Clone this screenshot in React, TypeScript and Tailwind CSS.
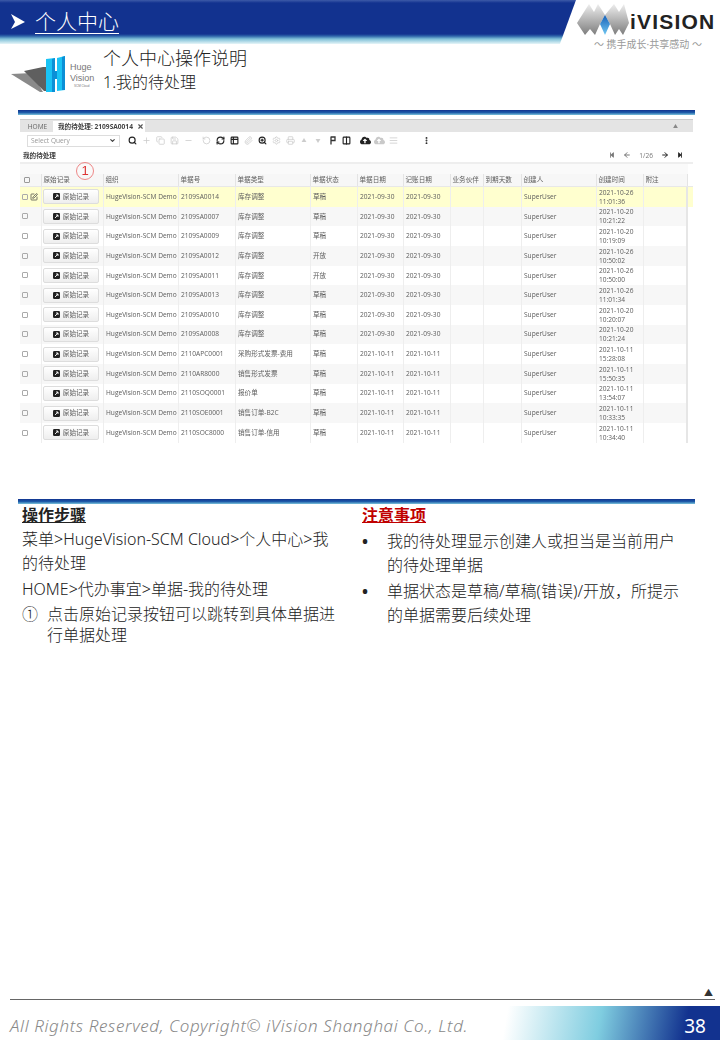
import React from "react";
import { Search, Plus, Copy, Save, Minus, RotateCcw, RefreshCw, Table2, Paperclip, ZoomIn, Settings, Printer, Columns2, AlignJustify, EllipsisVertical, ArrowLeft, ArrowRight, SquarePen, ChevronDown, X } from "lucide-react";
import { FaCloudUploadAlt, FaStepBackward, FaStepForward } from "react-icons/fa";

const cjk = "font-['Noto_Sans','Noto_Sans_CJK_SC',sans-serif]";
const columns = "grid grid-cols-[22px_62px_75px_57px_75px_47px_46px_47px_33px_38px_75px_47px_44px_5px]";
const heads = ["", "原始记录", "组织", "单据号", "单据类型", "单据状态", "单据日期", "记账日期", "业务伙伴", "到期天数", "创建人", "创建时间", "附注"];
const rows = [
  ["2109SA0014", "库存调整", "草稿", "2021-09-30", "2021-10-26", "11:01:36"],
  ["2109SA0007", "库存调整", "草稿", "2021-09-30", "2021-10-20", "10:21:22"],
  ["2109SA0009", "库存调整", "草稿", "2021-09-30", "2021-10-20", "10:19:09"],
  ["2109SA0012", "库存调整", "开放", "2021-09-30", "2021-10-26", "10:50:02"],
  ["2109SA0011", "库存调整", "开放", "2021-09-30", "2021-10-26", "10:50:00"],
  ["2109SA0013", "库存调整", "草稿", "2021-09-30", "2021-10-26", "11:01:34"],
  ["2109SA0010", "库存调整", "草稿", "2021-09-30", "2021-10-20", "10:20:07"],
  ["2109SA0008", "库存调整", "草稿", "2021-09-30", "2021-10-20", "10:21:24"],
  ["2110APC0001", "采购形式发票-费用", "草稿", "2021-10-11", "2021-10-11", "15:28:08"],
  ["2110AR8000", "销售形式发票", "草稿", "2021-10-11", "2021-10-11", "15:50:35"],
  ["2110SOQ0001", "报价单", "草稿", "2021-10-11", "2021-10-11", "13:54:07"],
  ["2110SOE0001", "销售订单-B2C", "草稿", "2021-10-11", "2021-10-11", "10:33:35"],
  ["2110SOC8000", "销售订单-信用", "草稿", "2021-10-11", "2021-10-11", "10:34:40"],
];

function Rule() {
  return <div className="h-[5px] mx-[18px] w-[677px] shrink-0 bg-gradient-to-b from-[#12328f] via-[#1d5aa8] to-[#7cc3da]" />;
}

function Diamonds() {
  return (
    <svg width="54" height="31" viewBox="0 0 54 31" className="shrink-0">
      <defs>
        <linearGradient id="g" x1="0" y1="0" x2="0" y2="1">
          <stop offset="0" stopColor="#eeeeee" />
          <stop offset="1" stopColor="#7d7d7d" />
        </linearGradient>
        <linearGradient id="b" x1="0" y1="0" x2="0" y2="1">
          <stop offset="0" stopColor="#1560b8" />
          <stop offset="1" stopColor="#72c8f2" />
        </linearGradient>
      </defs>
      <polygon points="1,19 13,0 18,8 22,0 29,11 38,0 43,8 48,0 53,19 47,31 43,25 39,31 34,20 29,11 24,20 19,31 14,25 9,31" fill="url(#g)" />
      <polygon points="24,20 29,11 34,20 29,31" fill="url(#b)" />
    </svg>
  );
}

function HugeLogo() {
  return (
    <div className="flex items-center w-[84px] h-[40px] shrink-0">
      <svg width="60" height="38" viewBox="0 0 60 38" className="shrink-0">
        <polygon points="1,18 22,17 33,36 30,36" fill="#8a8a8a" />
        <polygon points="14,15 33,11 37,11 37,35 34,35" fill="#5f5f5f" />
        <polygon points="36,3 45,2 45,36 36,36" fill="#19c3f5" />
        <polygon points="42,3 45,2 45,36 42,36" fill="#0b8fd6" />
        <polygon points="47,2 55,0 55,34 47,35" fill="#19c3f5" />
        <polygon points="52,1 55,0 55,34 52,34" fill="#0b8fd6" />
        <polygon points="45,15 47,15 47,23 45,23" fill="#0b8fd6" />
      </svg>
      <div className="-mr-[16px] flex flex-col font-['Liberation_Sans',sans-serif] font-normal text-[9px] leading-[11px] text-[#777]">
        <span>Huge</span>
        <span>Vision</span>
        <span className="text-[3px] leading-[4px] pl-[4px]">SCM Cloud</span>
      </div>
    </div>
  );
}

function Tool({ icon: I, dark, x }: { icon: any; dark?: boolean; x?: string }) {
  return (
    <span className={`w-[14px] flex justify-center ${x ?? ""}`}>
      <I size={9} strokeWidth={dark ? 3 : 2} className={dark ? "text-[#222]" : "text-[#c9c9c9]"} />
    </span>
  );
}

function Shot() {
  return (
    <div className="relative mx-[20px] w-[673px] h-[324px] shrink-0 blur-[0.35px] overflow-hidden text-[6.6px] font-normal text-[#5c5c5c] font-['Open_Sans','Noto_Sans_CJK_SC',sans-serif]">
      <div className="h-[13px] bg-[#e4e4e4] border-t border-[#ccc] flex items-end pl-[2px]">
        <div className="w-[31px] h-[11px] flex items-center justify-center text-[#666]">HOME</div>
        <div className="w-[92px] h-[11px] flex items-center pl-[5px] gap-[4px] bg-white font-bold text-[#444]">
          我的待处理: 2109SA0014<X size={7} strokeWidth={4} className="text-[#555]" />
        </div>
        <span className="ml-auto mr-[15px] mb-[2px] text-[#888] text-[5px]">▲</span>
      </div>
      <div className="h-[17px] flex items-center pl-[7px]">
        <div className="w-[93px] h-[12px] border border-[#ddd] flex items-center justify-between px-[3px] text-[#999]">
          Select Query<ChevronDown size={7} strokeWidth={4} className="text-[#444]" />
        </div>
        <div className="ml-[5px] flex items-center">
          <Tool icon={Search} dark /><Tool icon={Plus} /><Tool icon={Copy} /><Tool icon={Save} /><Tool icon={Minus} />
          <Tool icon={RotateCcw} x="ml-[4px]" /><Tool icon={RefreshCw} dark /><Tool icon={Table2} dark /><Tool icon={Paperclip} /><Tool icon={ZoomIn} dark />
          <Tool icon={Settings} /><Tool icon={Printer} />
          <span className="w-[14px] text-center text-[5px] text-[#ccc]">▲</span>
          <span className="w-[14px] text-center text-[5px] text-[#ccc]">▼</span>
          <span className="w-[14px] flex justify-center">
            <svg width="7" height="9" viewBox="0 0 7 9"><path d="M2 0.5V8.5M2 1H6V4.5H2" fill="none" stroke="#333" strokeWidth="1.3" /></svg>
          </span>
          <Tool icon={Columns2} dark />
          <span className="w-[14px] ml-[5px] flex justify-center"><FaCloudUploadAlt size={11} className="text-[#222]" /></span>
          <span className="w-[14px] flex justify-center"><FaCloudUploadAlt size={11} className="text-[#c9c9c9]" /></span>
          <Tool icon={AlignJustify} />
          <Tool icon={EllipsisVertical} dark x="ml-[19px]" />
        </div>
      </div>
      <div className="h-[15px] flex items-center justify-between pl-[3px] pr-[10px] border-b-2 border-[#eee]">
        <span className="font-bold text-[#444]">我的待处理</span>
        <div className="flex items-center gap-[8px] text-[#777]">
          <FaStepBackward size={6} className="text-[#777]" />
          <ArrowLeft size={8} strokeWidth={3} className="text-[#777]" />
          <span>1/26</span>
          <ArrowRight size={8} strokeWidth={3} className="text-[#222]" />
          <FaStepForward size={6} className="text-[#222]" />
        </div>
      </div>
      <div className="h-[10px] bg-[#fafafa] w-[668px]" />
      <div className={`${columns} h-[13px] w-[673px] bg-[#f7f7f7] border-b border-[#e8e8e8] items-center`}>
        {heads.map((h, i) => (
          <div key={i} className="h-full flex items-center pl-[1.5px] border-r border-[#e4e4e4]">
            {i === 0 ? <span className="ml-[2px] w-[6px] h-[6px] border border-[#999] rounded-[1px]" /> : h}
          </div>
        ))}
        <div className="h-full bg-white" />
      </div>
      {rows.map((r, i) => (
        <div key={r[0]} className={`${columns} h-[19.66px] w-[673px] items-center ${i === 0 ? "bg-[#ffffcf]" : i % 2 ? "bg-[#f7f7f7]" : "bg-white"}`}>
          <div className="h-full flex items-center gap-[2px] pl-[2px] border-r border-[#eee]">
            <span className="w-[6px] h-[6px] border border-[#aaa] rounded-[1px]" />
            {i === 0 && <SquarePen size={8} className="text-[#333]" />}
          </div>
          <div className="h-full flex items-center pl-[1px] border-r border-[#eee]">
            <div className="w-[56px] h-[15px] flex items-center justify-center gap-[3px] rounded-[2px] border border-[#ddd] bg-gradient-to-b from-white to-[#eee]">
              <svg width="7" height="7" viewBox="0 0 7 7" className="shrink-0">
                <rect width="7" height="7" rx="1.2" fill="#222" />
                <path d="M2 5L5 2M3 2H5V4" fill="none" stroke="#fff" strokeWidth="0.9" />
              </svg>
              原始记录
            </div>
          </div>
          <div className="h-full flex items-center pl-[2px] border-r border-[#eee] whitespace-nowrap">HugeVision-SCM Demo</div>
          <div className="h-full flex items-center pl-[2px] border-r border-[#eee]">{r[0]}</div>
          <div className="h-full flex items-center pl-[2px] border-r border-[#eee]">{r[1]}</div>
          <div className="h-full flex items-center pl-[2px] border-r border-[#eee]">{r[2]}</div>
          <div className="h-full flex items-center pl-[2px] border-r border-[#eee]">{r[3]}</div>
          <div className="h-full flex items-center pl-[2px] border-r border-[#eee]">{r[3]}</div>
          <div className="h-full border-r border-[#eee]" />
          <div className="h-full border-r border-[#eee]" />
          <div className="h-full flex items-center pl-[2px] border-r border-[#eee]">SuperUser</div>
          <div className="h-full flex flex-col justify-center pl-[2px] leading-[9px] border-r border-[#eee]">
            <span>{r[4]}</span>
            <span>{r[5]}</span>
          </div>
          <div className="h-full border-r-2 border-[#e6e6e6]" />
          <div className={`h-full ${i === 0 ? "bg-[#ffffcf]" : "bg-white"}`} />
        </div>
      ))}
      <div className="absolute left-[56px] top-[43px] w-[18px] h-[18px] rounded-full border border-[#e88] text-[#d33] text-[13px] leading-[16px] text-center font-['Liberation_Sans',sans-serif]">1</div>
    </div>
  );
}

export default function App() {
  return (
    <div className={`w-[720px] h-[1040px] bg-white flex flex-col overflow-hidden text-[16px] font-light text-[#222] ${cjk}`}>
      <header className="flex h-[52px] shrink-0">
        <div className="w-[576px] h-[44px] [clip-path:polygon(0_0,100%_0,97.2%_100%,0_100%)] bg-[linear-gradient(to_bottom,#3d5aa8_0,#12328f_3px,#12328f_34px,#2b62a8_36px,#7fc0d8_39px,#e6f5f8_44px)] flex items-center pb-[2px]">
          <svg width="14" height="15" viewBox="0 0 14 15" className="ml-[11px] mt-[1px]"><polygon points="0,0 14,8 0,15 4,8" fill="#fff" /></svg>
          <span className="ml-[10px] text-[21px] leading-[26px] text-white underline underline-offset-[4px] decoration-1">个人中心</span>
        </div>
        <div className="flex-1 flex flex-col pt-[4px]">
          <div className="flex items-center h-[31px]">
            <Diamonds />
            <span className="mt-[4px] font-['Liberation_Sans',sans-serif] font-bold text-[21px] tracking-[1.2px] text-[#222] whitespace-nowrap">iVISION</span>
          </div>
          <span className="ml-[18px] text-[10px] leading-[12px] text-[#999] mt-[3px] font-normal whitespace-nowrap">～ 携手成长·共享感动 ～</span>
        </div>
      </header>

      <section className="flex items-start pl-[10px] h-[58px] shrink-0">
        <div className="mt-[3px]"><HugeLogo /></div>
        <div className="ml-[9px] flex flex-col">
          <span className="text-[18px] leading-[24px] -mt-[6px]">个人中心操作说明</span>
          <span className="text-[16px] leading-[22px] mt-[1px]">1.我的待处理</span>
        </div>
      </section>

      <Rule />
      <div className="h-[4px] shrink-0" />
      <Shot />
      <div className="h-[56px] shrink-0" />
      <Rule />

      <section className="flex pl-[22px]">
        <div className="w-[320px]">
          <h2 className="font-bold underline leading-[22px]">操作步骤</h2>
          <p className="mt-[1px] leading-[24px]">菜单&gt;HugeVision-SCM Cloud&gt;个人中心&gt;我的待处理</p>
          <p className="mt-[2px] leading-[24px]">HOME&gt;代办事宜&gt;单据-我的待处理</p>
          <div className="flex mt-[3px] leading-[21px]">
            <span className="w-[25px] shrink-0">①</span>
            <p>点击原始记录按钮可以跳转到具体单据进行单据处理</p>
          </div>
        </div>
        <div className="ml-[20px] w-[320px]">
          <h2 className="font-bold underline leading-[22px] text-[#c00000]">注意事项</h2>
          <div className="flex mt-[3px] leading-[24px]"><span className="w-[25px] shrink-0 font-bold">•</span><p>我的待处理显示创建人或担当是当前用户的待处理单据</p></div>
          <div className="flex mt-[2px] leading-[24px]"><span className="w-[25px] shrink-0 font-bold">•</span><p>单据状态是草稿/草稿(错误)/开放，所提示的单据需要后续处理</p></div>
        </div>
      </section>

      <footer className="mt-auto shrink-0">
        <div className="flex justify-end pr-[7px] text-[9px] leading-[10px] text-[#333]">▲</div>
        <div className="mx-[10px] w-[705px] h-px bg-[#666] mt-[1px]" />
        <div className="h-[6px]" />
        <div className="flex items-center justify-between h-[34px] pl-[10px] pt-[6px] bg-[linear-gradient(100deg,#ffffff_70%,#7fcde0_83%,#12328f_95%)]">
          <span className="italic text-[17px] text-[#888] tracking-[0.62px]">All Rights Reserved, Copyright© iVision Shanghai Co., Ltd.</span>
          <span className="text-white text-[19px] font-normal pr-[14px]">38</span>
        </div>
      </footer>
    </div>
  );
}
